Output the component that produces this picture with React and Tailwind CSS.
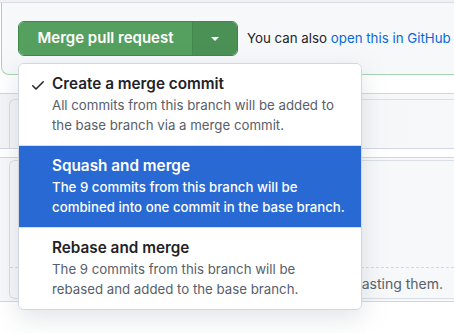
import React from 'react';

const options = [
    {
        title: 'Create a merge commit',
        lines: ['All commits from this branch will be added to', 'the base branch via a merge commit.'],
        checked: true,
    },
    {
        title: 'Squash and merge',
        lines: ['The 9 commits from this branch will be', 'combined into one commit in the base branch.'],
        selected: true,
    },
    {
        title: 'Rebase and merge',
        lines: ['The 9 commits from this branch will be', 'rebased and added to the base branch.'],
    },
];

const CheckIcon = () => (
    <svg width="16" height="16" viewBox="0 0 16 16" fill="currentColor">
        <path d="M13.78 4.22a.75.75 0 0 1 0 1.06l-7.25 7.25a.75.75 0 0 1-1.06 0L2.22 9.28a.75.75 0 0 1 1.06-1.06L6 10.94l6.72-6.72a.75.75 0 0 1 1.06 0Z" />
    </svg>
);

const MergeMenu = () => (
    <div className="absolute left-[18px] top-[63px] w-[344px] rounded-[6px] border border-[#d0d7de] bg-white overflow-hidden shadow-[0_8px_24px_rgba(140,149,159,0.25)]">
        {options.map((opt, i) => (
            <div
                key={opt.title}
                className={`flex pl-[11px] pr-3 pt-[10px] pb-[10px] ${i > 0 ? 'border-t border-[#d8dee4]' : ''} ${opt.selected ? 'bg-[#2869d3]' : 'bg-white'}`}
            >
                <div className="w-4 h-5 mt-[1px] shrink-0 flex items-center text-[#1f2328]">
                    {opt.checked && <CheckIcon />}
                </div>
                <div className="ml-[6px] whitespace-nowrap">
                    <div className={`text-[15.3px] leading-[20px] font-semibold ${opt.selected ? 'text-white' : 'text-[#1f2328]'}`}>
                        {opt.title}
                    </div>
                    <div className={`mt-[1px] text-[13.25px] leading-[20px] ${opt.selected ? 'text-white font-medium' : 'text-[#57606a]'}`}>
                        {opt.lines[0]}
                        <br />
                        {opt.lines[1]}
                    </div>
                </div>
            </div>
        ))}
    </div>
);

export default function App() {
    return (
        <div className="relative w-[454px] h-[333px] overflow-hidden bg-white font-['Inter',sans-serif]">
            {/* top edge */}
            <div className="h-[3px] bg-[#eff1f3] border-b border-[#d8dee4]" />

            {/* merge box */}
            <div className="ml-[1px] h-[72px] border-l border-b border-[#a8d2b0] rounded-bl-[8px] bg-[#f6f8fa] pt-[18px] pl-4">
                <div className="flex items-center">
                    <div className="flex shrink-0 h-[35px] rounded-[6px] border border-[#3f8747] overflow-hidden">
                        <div className="w-[173px] bg-[#55a05f] text-white text-[15px] font-semibold flex items-center justify-center">
                            Merge pull request
                        </div>
                        <div className="w-[45px] bg-[#4b9155] border-l border-[#428a4c] flex items-center justify-center">
                            <div className="w-0 h-0 border-l-[4px] border-r-[4px] border-t-[4px] border-l-transparent border-r-transparent border-t-white" />
                        </div>
                    </div>
                    <div className="ml-[9px] text-[13.3px] text-[#1f2328] whitespace-nowrap">
                        You can also <span className="text-[#0969da]">open this in GitHub</span>
                    </div>
                </div>
            </div>

            <div className="h-[18px] bg-white" />

            {/* behind the menu: review boxes */}
            <div className="h-[55px] border-t border-[#d0d7de] bg-gradient-to-r from-[#f3f5f7] to-[#f6f8fa] pt-[5px]">
                <div className="ml-[9px] h-full border-l border-t border-[#d8dee4] rounded-tl-[6px]" />
            </div>
            <div className="h-[9px] border-t border-[#d0d7de] bg-white" />
            <div className="h-[145px] border-t border-b border-[#d0d7de] bg-[#f6f8fa] pt-[2px]">
                <div className="ml-[9px] h-[139px] border-l border-b border-t border-[#d8dee4] rounded-tl-[6px] rounded-bl-[6px] flex flex-col">
                    <div className="h-[106px]" />
                    <div className="border-t border-dashed border-[#d0d7de]" />
                    <div className="flex-1 flex items-center justify-end pr-[11px] text-[14px] text-[#57606a] whitespace-nowrap">
                        asting them.
                    </div>
                </div>
            </div>

            <MergeMenu />
        </div>
    );
}
